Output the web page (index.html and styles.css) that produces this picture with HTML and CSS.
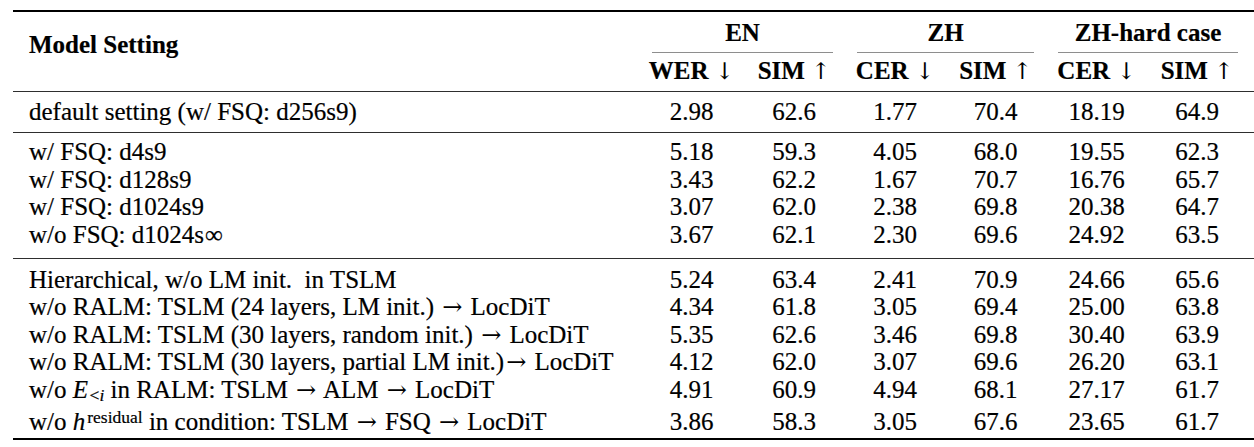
FILE: index.html
```html
<!DOCTYPE html>
<html lang="en">
<head>
<meta charset="utf-8">
<title>Ablation results</title>
<link rel="stylesheet" href="styles.css">
</head>
<body>
<table class="results">
  <colgroup>
    <col class="c-setting">
    <col class="c-wer">
    <col class="c-sim1">
    <col class="c-cer">
    <col class="c-sim2">
    <col class="c-cer2">
    <col class="c-sim3">
  </colgroup>
  <thead>
    <tr class="groups">
      <th class="setting" rowspan="2">Model Setting</th>
      <th class="grp" colspan="2"><div class="grp-label">EN</div></th>
      <th class="grp" colspan="2"><div class="grp-label">ZH</div></th>
      <th class="grp grp-end" colspan="2"><div class="grp-label">ZH-hard case</div></th>
    </tr>
    <tr class="metrics">
      <th>WER <span class="varr">↓</span></th>
      <th>SIM <span class="varr">↑</span></th>
      <th>CER <span class="varr">↓</span></th>
      <th>SIM <span class="varr">↑</span></th>
      <th>CER <span class="varr">↓</span></th>
      <th class="end">SIM <span class="varr">↑</span></th>
    </tr>
  </thead>
  <tbody class="g1">
    <tr><td class="label">default setting (w/ FSQ: d256s9)</td><td>2.98</td><td>62.6</td><td>1.77</td><td>70.4</td><td>18.19</td><td class="end">64.9</td></tr>
  </tbody>
  <tbody class="g2">
    <tr><td class="label">w/ FSQ: d4s9</td><td>5.18</td><td>59.3</td><td>4.05</td><td>68.0</td><td>19.55</td><td class="end">62.3</td></tr>
    <tr><td class="label">w/ FSQ: d128s9</td><td>3.43</td><td>62.2</td><td>1.67</td><td>70.7</td><td>16.76</td><td class="end">65.7</td></tr>
    <tr><td class="label">w/ FSQ: d1024s9</td><td>3.07</td><td>62.0</td><td>2.38</td><td>69.8</td><td>20.38</td><td class="end">64.7</td></tr>
    <tr><td class="label">w/o FSQ: d1024s<span class="inf">∞</span></td><td>3.67</td><td>62.1</td><td>2.30</td><td>69.6</td><td>24.92</td><td class="end">63.5</td></tr>
  </tbody>
  <tbody class="g3">
    <tr><td class="label">Hierarchical, w/o LM init.&nbsp; in TSLM</td><td>5.24</td><td>63.4</td><td>2.41</td><td>70.9</td><td>24.66</td><td class="end">65.6</td></tr>
    <tr><td class="label">w/o RALM: TSLM (24 layers, LM init.) <span class="arr">→</span> LocDiT</td><td>4.34</td><td>61.8</td><td>3.05</td><td>69.4</td><td>25.00</td><td class="end">63.8</td></tr>
    <tr><td class="label">w/o RALM: TSLM (30 layers, random init.) <span class="arr">→</span> LocDiT</td><td>5.35</td><td>62.6</td><td>3.46</td><td>69.8</td><td>30.40</td><td class="end">63.9</td></tr>
    <tr><td class="label">w/o RALM: TSLM (30 layers, partial LM init.)<span class="arr">→</span> LocDiT</td><td>4.12</td><td>62.0</td><td>3.07</td><td>69.6</td><td>26.20</td><td class="end">63.1</td></tr>
    <tr class="row-sub"><td class="label">w/o <span class="mi">E</span><span class="sub">&lt;<span class="mi">i</span></span> in RALM: TSLM <span class="arr">→</span> ALM <span class="arr">→</span> LocDiT</td><td>4.91</td><td>60.9</td><td>4.94</td><td>68.1</td><td>27.17</td><td class="end">61.7</td></tr>
    <tr class="row-sup"><td class="label">w/o <span class="mi">h</span><span class="sup">residual</span> in condition: TSLM <span class="arr">→</span> FSQ <span class="arr">→</span> LocDiT</td><td>3.86</td><td>58.3</td><td>3.05</td><td>67.6</td><td>23.65</td><td class="end">61.7</td></tr>
  </tbody>
</table>
</body>
</html>
```

FILE: styles.css
```css
html, body {
  margin: 0;
  background: #ffffff;
}

body {
  padding: 10px 0 0 13px;
  font-family: "Liberation Serif", "Times New Roman", serif;
  font-size: 25px;
  color: #000;
  overflow: hidden;
  -webkit-text-stroke: 0.2px #000;
}

.results {
  border-collapse: separate;
  border-spacing: 0;
  table-layout: fixed;
  width: 1241px;
  border-top: 2px solid #000;
}

.c-setting { width: 627px; }
.c-wer { width: 103px; }
.c-sim1 { width: 102px; }
.c-cer { width: 100px; }
.c-sim2 { width: 101px; }
.c-cer2 { width: 101px; }
.c-sim3 { width: 107px; }

th, td {
  padding: 0;
  line-height: 27.5px;
  white-space: nowrap;
  font-weight: normal;
  text-align: center;
}

.end { padding-right: 7px; }

/* header */
.setting {
  vertical-align: top;
  text-align: left;
  padding: 19px 0 0 16px;
  font-weight: 700;
  border-bottom: 1px solid #2e2e2e;
}

.grp {
  vertical-align: top;
  padding: 0 12px;
}

.grp-end { padding-right: 16px; }

.grp-label {
  padding: 7px 0 5.5px;
  border-bottom: 1px solid #8e8e8e;
  font-weight: 700;
}

.metrics th {
  padding-top: 3.5px;
  padding-bottom: 7px;
  font-weight: 700;
  border-bottom: 1px solid #2e2e2e;
}

.metrics th.end { padding-right: 7px; }

.varr {
  font-family: "DejaVu Serif", "Liberation Serif", serif;
  font-weight: 400;
  font-size: 0.92em;
  line-height: 0;
  -webkit-text-stroke: 0;
}

.arr {
  display: inline-block;
  width: 1em;
  text-align: center;
  font-family: "DejaVu Serif", "Liberation Serif", serif;
  font-size: 0.96em;
  line-height: 0;
  -webkit-text-stroke: 0;
}

/* body */
.label {
  text-align: left;
  padding-left: 16px;
}

.g1 td {
  padding-top: 6px;
  padding-bottom: 6.5px;
  border-bottom: 1px solid #2e2e2e;
}

.g2 tr:first-child td { padding-top: 5px; }
.g2 tr:last-child td {
  padding-bottom: 9.5px;
  border-bottom: 1px solid #2e2e2e;
}

.g3 tr:first-child td { padding-top: 7px; }
.g3 .row-sub td { padding-bottom: 3px; }
.g3 .row-sup td {
  padding-top: 2px;
  padding-bottom: 2px;
  border-bottom: 2px solid #000;
}

.g1 td.end, .g2 td.end, .g3 td.end { padding-right: 7px; }

/* math */
.mi { font-style: italic; }

.sub {
  font-size: 0.7em;
  line-height: 0;
  vertical-align: -0.2em;
  margin-left: 1.5px;
}

.sup {
  font-size: 0.7em;
  line-height: 0;
  vertical-align: 0.42em;
  margin-left: 2px;
}

.inf {
  margin-left: 1px;
  letter-spacing: 2px;
}
```
